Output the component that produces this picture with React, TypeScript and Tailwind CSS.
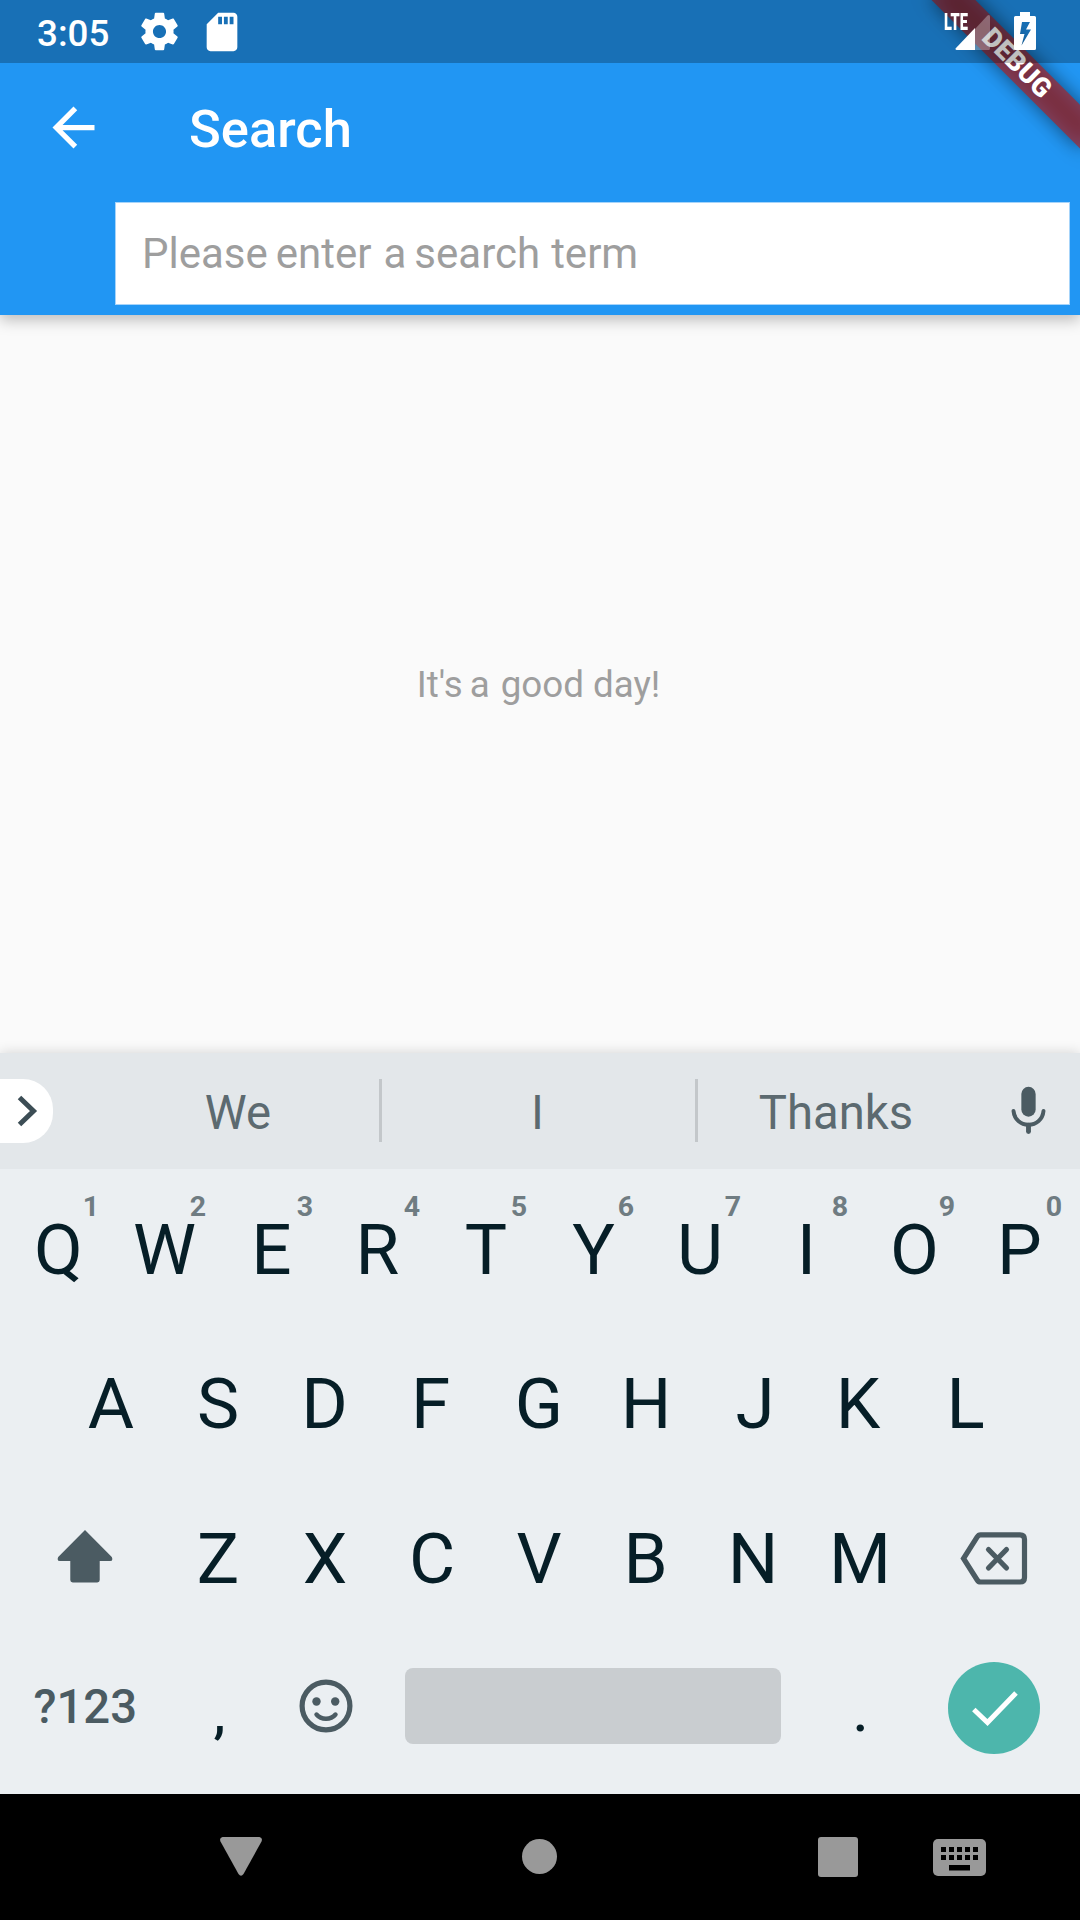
import React from "react";

const TOP_ROW = ["Q", "W", "E", "R", "T", "Y", "U", "I", "O", "P"];
const HOME_ROW = ["A", "S", "D", "F", "G", "H", "J", "K", "L"];
const BOTTOM_ROW = ["Z", "X", "C", "V", "B", "N", "M"];

const OPTICAL: Record<string, string> = {
  Q: "pl-[2px]",
  T: "pl-[1px]",
  Y: "pl-[2px]",
  U: "pl-[1px]",
  O: "pl-[2px]",
  J: "pl-[4px]",
  R: "pr-[2px]",
  P: "pr-[2px]",
  D: "pr-[1px]",
  F: "pr-[3px]",
  K: "pr-[4px]",
  L: "pr-[3px]",
  B: "pr-[1px]",
};

function Key({ label, hint }: { label: string; hint?: string }) {
  return (
    <div className="relative flex h-full w-[107px] shrink-0 items-center justify-center text-[71px] leading-none text-[#061e27]">
      <span className={OPTICAL[label]}>{label}</span>
      {hint && (
        <span className="absolute left-[78px] top-[19px] w-[18px] text-center text-[28.5px] font-bold leading-[32px] text-[#6f7c82]">
          {hint}
        </span>
      )}
    </div>
  );
}

function DebugBanner() {
  return (
    <div className="absolute right-0 top-0 size-[240px] overflow-hidden">
      <div className="absolute right-0 top-0 size-0 rotate-45">
        <div className="absolute -left-[105px] top-[73.5px] h-[31.5px] w-[210px] bg-black/50 blur-[9.5px]" />
        <div className="absolute -left-[105px] top-[73.5px] flex h-[31.5px] w-[210px] items-center justify-center bg-[#b71c1c]/63 text-[26.8px] font-black leading-none text-white">
          DEBUG
        </div>
      </div>
    </div>
  );
}

function StatusBar() {
  return (
    <div className="absolute inset-x-0 top-0 flex h-[63px] items-start bg-black/25 text-white">
      <span className="ml-[37px] mt-[12px] w-[73px] text-[36.75px] font-medium leading-[43px]">3:05</span>
      <svg className="ml-[27px] mt-[9px] size-[45px]" viewBox="0 0 24 24" fill="currentColor">
        <path d="M19.43 12.98c.04-.32.07-.64.07-.98s-.03-.66-.07-.98l2.11-1.65c.19-.15.24-.42.12-.64l-2-3.46c-.12-.22-.39-.3-.61-.22l-2.49 1c-.52-.4-1.08-.73-1.69-.98l-.38-2.65C14.46 2.18 14.25 2 14 2h-4c-.25 0-.46.18-.49.42l-.38 2.65c-.61.25-1.17.59-1.69.98l-2.49-1c-.23-.09-.49 0-.61.22l-2 3.46c-.13.22-.07.49.12.64l2.11 1.65c-.04.32-.07.65-.07.98s.03.66.07.98l-2.11 1.65c-.19.15-.24.42-.12.64l2 3.46c.12.22.39.3.61.22l2.49-1c.52.4 1.08.73 1.69.98l.38 2.65c.03.24.24.42.49.42h4c.25 0 .46-.18.49-.42l.38-2.65c.61-.25 1.17-.59 1.69-.98l2.49 1c.23.09.49 0 .61-.22l2-3.46c.12-.22.07-.49-.12-.64l-2.11-1.65zM12 15.5c-1.93 0-3.5-1.57-3.5-3.5s1.57-3.5 3.5-3.5 3.5 1.57 3.5 3.5-1.57 3.5-3.5 3.5z" />
      </svg>
      <svg className="ml-[17px] mt-[8.5px] size-[46px]" viewBox="0 0 24 24" fill="currentColor">
        <path d="M18 2h-8L4.02 8 4 20c0 1.1.9 2 2 2h12c1.1 0 2-.9 2-2V4c0-1.1-.9-2-2-2zm-6 6h-2V4h2v4zm3 0h-2V4h2v4zm3 0h-2V4h2v4z" />
      </svg>
      <div className="relative ml-auto mr-[23px] mt-[14px] h-[36px] w-[46px]">
        <span className="absolute -left-px -top-[4px] origin-left scale-x-[0.62] text-[23.5px] font-black leading-[24px]">LTE</span>
        <svg className="absolute left-[10px] top-0 h-[36px] w-[36px]" viewBox="0 0 36 36">
          <path d="M20 15V36H34Q35 36 35 34V3Q35 0 32.500 1.500z" fill="#fff" fillOpacity=".3" />
          <path d="M20 14V36H1.500Q-.3 35.500 1 34z" fill="#fff" />
        </svg>
      </div>
      <svg className="mr-[44px] mt-[12px] h-[38px] w-[22px]" viewBox="0 0 22 38">
        <path
          fill="#fff"
          fillRule="evenodd"
          d="M6 0H16V4H20.500Q22 4 22 5.500V36.500Q22 38 20.500 38H1.500Q0 38 0 36.500V5.500Q0 4 1.500 4H6zM8 10 6 22H10.500L7.500 33.500 17 17.500H12L16 10z"
        />
      </svg>
    </div>
  );
}

function AppBar() {
  return (
    <header className="relative z-10 h-[315px] bg-[#2196f3] pt-[63px] shadow-[0_5px_14px_rgba(0,0,0,0.25)]">
      <div className="flex h-[129px] items-center text-white">
        <svg className="ml-[42px] size-[63px]" viewBox="0 0 24 24" fill="currentColor">
          <path d="M20 11H7.830l5.590-5.590L12 4l-8 8 8 8 1.410-1.410L7.830 13H20v-2z" />
        </svg>
        <h1 className="ml-[84px] mt-[3px] text-[52.5px] font-medium leading-none">Search</h1>
      </div>
      <div className="ml-[115px] mr-[10px] mt-[10px] flex h-[103px] items-center border border-[#a6d4fa] bg-white pl-[26px] text-[42px] leading-none text-[#9e9e9e]">
        <span>Please</span>
        <span className="ml-[8px]">enter</span>
        <span className="ml-[12px]">a</span>
        <span className="ml-[8px]">search</span>
        <span className="ml-[11px]">term</span>
      </div>
    </header>
  );
}

function SuggestionBar() {
  return (
    <div className="flex h-[116px] items-center bg-[#e3e7ea] pb-[1px] text-[47.25px] leading-none text-[#5c6a70]">
      <div className="flex h-[64px] w-[52.5px] items-center rounded-r-[30px] bg-white">
        <svg className="ml-[17px] h-[32px] w-[22px]" viewBox="0 0 22 32" fill="none" stroke="#3c4d55" strokeWidth="5">
          <path d="M2.500 2.500 16.500 16 2.500 29.500" />
        </svg>
      </div>
      <div className="ml-[44.5px] mt-[6px] w-[282px] text-center">We</div>
      <div className="h-[63px] w-[3px] bg-[#c3c7ca]" />
      <div className="mt-[6px] w-[313px] pr-[2px] text-center">I</div>
      <div className="h-[63px] w-[3px] bg-[#c3c7ca]" />
      <div className="mt-[6px] w-[276px] text-center">Thanks</div>
      <svg className="-mt-[1px] ml-[37px] h-[48px] w-[35px]" viewBox="0 0 35 49" fill="none" stroke="#4b5b62">
        <path d="M2.200 25.500C3 34 9.500 39.500 17.500 39.500S32 34 32.800 25.500" strokeWidth="4" strokeLinecap="round" />
        <path d="M17.500 40V46.500" strokeWidth="5" strokeLinecap="round" />
        <rect x="10.200" y=".8" width="14.600" height="30.500" rx="7.300" fill="#4b5b62" stroke="none" />
      </svg>
    </div>
  );
}

function Keyboard() {
  return (
    <div className="bg-[#ebeff2] shadow-[0_0_12px_rgba(0,0,0,0.16)]">
      <SuggestionBar />
      <div className="h-[625px] pr-[2px] pt-[3px]">
        <div className="flex h-[154px] justify-center">
          {TOP_ROW.map((k, i) => (
            <Key key={k} label={k} hint={String((i + 1) % 10)} />
          ))}
        </div>
        <div className="flex h-[154px] justify-center">
          {HOME_ROW.map((k) => (
            <Key key={k} label={k} />
          ))}
        </div>
        <div className="flex h-[156px] justify-center">
          <div className="flex w-[160.500px] items-center justify-center pl-[1px]">
            <svg className="-mt-[4px] h-[53px] w-[56px]" viewBox="0 0 56 54" fill="#4b5b62">
              <path d="M28 0 55.300 27.500Q57 31.500 53.500 31.700H43V51Q43 53.500 40.500 53.500H15.500Q13 53.500 13 51V31.700H2.500Q-1 31.500.7 27.500z" />
            </svg>
          </div>
          {BOTTOM_ROW.map((k) => (
            <Key key={k} label={k} />
          ))}
          <div className="flex w-[160.500px] items-center justify-center">
            <svg className="h-[53px] w-[68px]" viewBox="0 0 68 53" fill="none" stroke="#4b5b62" strokeWidth="5.200" strokeLinecap="round">
              <path d="M20.500 2.800H60Q64.500 2.800 64.500 7.300V45.500Q64.500 50 60 50H20.500Q18.500 50 17.200 48L3.500 26.500 17.200 5Q18.500 2.800 20.500 2.800z" />
              <path d="M28.500 17.500 46.500 36M46.500 17.500 28.500 36" />
            </svg>
          </div>
        </div>
        <div className="flex h-[140px] items-center justify-center text-[#4b5b62]">
          <div className="mt-[3px] w-[160.500px] pl-[2px] text-center text-[47.25px] font-medium leading-none">?123</div>
          <div className="mt-[15px] w-[107px] pl-[3px] text-center text-[54px] font-medium leading-none text-[#061e27]">,</div>
          <div className="flex w-[107px] justify-center pl-[1px]">
            <svg className="size-[54px]" viewBox="0 0 54 54" fill="currentColor">
              <circle cx="27" cy="27" r="23.900" fill="none" stroke="currentColor" strokeWidth="5.200" />
              <circle cx="17.500" cy="22.500" r="4.200" />
              <circle cx="36.200" cy="22.500" r="4.200" />
              <path d="M17.500 35.500Q21 39.700 27 39.700T36.500 35.500" fill="none" stroke="currentColor" strokeWidth="4.400" strokeLinecap="round" />
            </svg>
          </div>
          <div className="flex w-[428px] justify-center">
            <div className="h-[76px] w-[376px] rounded-[8px] bg-[#c9cdd0]" />
          </div>
          <div className="mt-[14px] w-[107px] pl-[1px] text-center text-[54px] font-medium leading-none text-[#061e27]">.</div>
          <div className="flex w-[160.500px] justify-center">
            <div className="mt-[4px] flex size-[92px] items-center justify-center rounded-full bg-[#4db6ac]">
              <svg className="ml-[2px] h-[36px] w-[48px]" viewBox="0 0 48 36" fill="none" stroke="#fff" strokeWidth="5">
                <path d="M2.800 19.500 16.500 32.500 45 3" />
              </svg>
            </div>
          </div>
        </div>
      </div>
    </div>
  );
}

function NavBar() {
  return (
    <nav className="flex h-[126px] items-center bg-black text-[#999]">
      <svg className="-mt-px ml-[220px] h-[39px] w-[42px]" viewBox="0 0 42 39" fill="currentColor">
        <path d="M2.500 0H39.500Q43 .8 41.500 4.500L23.500 37Q21 40.500 18.500 37L.5 4.500Q-1 .8 2.500 0z" />
      </svg>
      <div className="-mt-[1px] ml-[260px] size-[35px] rounded-full bg-current" />
      <div className="ml-[261px] size-[40px] rounded-[3px] bg-current" />
      <svg className="ml-[75px] mt-[1px] h-[37px] w-[53px]" viewBox="0 0 53 37">
        <rect width="53" height="37" rx="5" fill="currentColor" />
        {[8, 16, 24, 32, 40].map((x) => (
          <React.Fragment key={x}>
            <rect x={x} y="8" width="5" height="5" />
            <rect x={x} y="16" width="5" height="5" />
          </React.Fragment>
        ))}
        <rect x="16" y="26" width="21" height="5.500" />
      </svg>
    </nav>
  );
}

export default function App() {
  return (
    <div className="relative flex h-[1920px] w-[1080px] flex-col overflow-hidden bg-[#fafafa] font-['Roboto',sans-serif]">
      <AppBar />
      <main className="flex h-[738px] items-center justify-center pr-[3px] pt-[2px] text-[36.75px] leading-none text-[#9e9e9e]">
        <span>It's</span>
        <span className="ml-[7px]">a</span>
        <span className="ml-[11px]">good</span>
        <span className="ml-[9px]">day!</span>
      </main>
      <Keyboard />
      <NavBar />
      <div className="absolute inset-x-0 top-0 z-20 h-[240px]">
        <DebugBanner />
        <StatusBar />
      </div>
    </div>
  );
}
